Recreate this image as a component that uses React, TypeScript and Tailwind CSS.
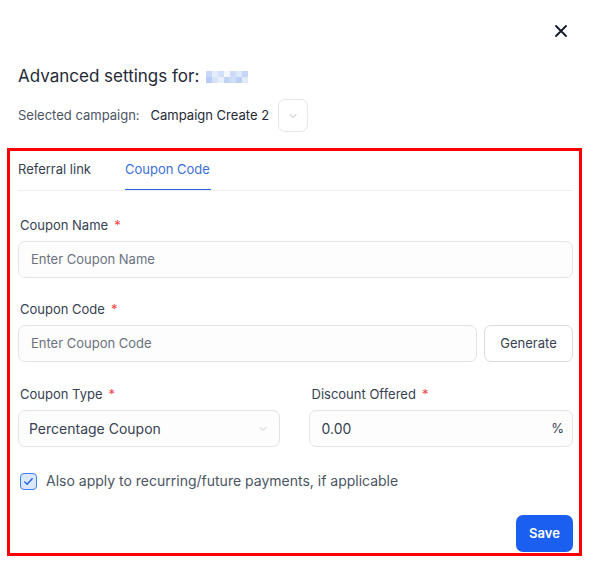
import React from "react";

const Chevron = ({ className = "" }: { className?: string }) => (
  <svg className={className} width="12" height="12" viewBox="0 0 24 24" fill="none" stroke="currentColor" strokeWidth="1.5" strokeLinecap="round" strokeLinejoin="round">
    <path d="M6 9l6 6 6-6" />
  </svg>
);

const Label = ({ children }: { children: React.ReactNode }) => (
  <div className="flex items-center h-4 text-[13px] text-[#374151] pl-[2px] mb-[7px]">
    <span>{children}</span>
    <span className="text-[#ef4444] ml-[6px]">*</span>
  </div>
);

const blur = [
  ["#c9d8f7", "#e4ebfb", "#d3dff8", "#f3f6fd", "#cddbf8", "#dfe7fa", "#c5d5f7"],
  ["#b7cbf5", "#d8e3f9", "#e9eefc", "#c2d3f6", "#d0ddf8", "#bcd0f6", "#e1e9fb"],
];

export default function App() {
  return (
    <div className="w-[590px] h-[567px] bg-white relative" style={{ fontFamily: "Inter, 'Noto Sans', sans-serif" }}>
      <div className="flex justify-end pt-[24px] pr-[22px]">
        <svg width="14" height="14" viewBox="0 0 14 14" fill="none" stroke="#111827" strokeWidth="1.8" strokeLinecap="round">
          <path d="M2 2l10 10M12 2L2 12" />
        </svg>
      </div>
      <div className="pl-[18px] mt-[28px] flex items-center h-[22px]">
        <span className="text-[17px] text-[#1f2937]">Advanced settings for:</span>
        <span className="ml-[7px] flex flex-col">
          {blur.map((row, i) => (
            <span key={i} className="flex">
              {row.map((c, j) => (
                <span key={j} className="w-[6px] h-[6px]" style={{ backgroundColor: c }} />
              ))}
            </span>
          ))}
        </span>
      </div>
      <div className="pl-[18px] mt-[11px] flex items-center h-[33px]">
        <span className="text-[13px] text-[#4b5563]">Selected campaign:</span>
        <span className="ml-[11px] text-[13px] text-[#1f2937]">Campaign Create 2</span>
        <button className="ml-[9px] w-[30px] h-[33px] rounded-[7px] border border-[#e5e7eb] flex items-center justify-center text-[#9ca3af]">
          <Chevron />
        </button>
      </div>
      <div className="absolute left-[7px] top-[148px] w-[575px] h-[408px] border-[3px] border-[#ff0000] pl-[8px] pr-[6px] flex flex-col">
        <div className="flex border-b border-[#eceef3] h-[40px]">
          <div className="text-[13px] text-[#374151] pt-[8px] leading-[20px]">Referral link</div>
          <div className="ml-[34px] text-[13px] text-[#3b6fe0] pt-[8px] leading-[20px] border-b-[1.5px] border-[#2f66e0] px-0 w-[86px]">Coupon Code</div>
        </div>
        <div className="mt-[27px]">
          <Label>Coupon Name</Label>
          <div className="h-[37px] rounded-[7px] border border-[#e2e4e8] bg-[#fdfdfd] flex items-center px-[12px] text-[13px] text-[#6b7280]">Enter Coupon Name</div>
        </div>
        <div className="mt-[24px]">
          <Label>Coupon Code</Label>
          <div className="flex gap-[7px]">
            <div className="flex-1 h-[37px] rounded-[7px] border border-[#e2e4e8] bg-[#fdfdfd] flex items-center px-[12px] text-[13px] text-[#6b7280]">Enter Coupon Code</div>
            <button className="w-[89px] h-[37px] rounded-[7px] border border-[#d9dce1] text-[13px] text-[#374151] bg-white">Generate</button>
          </div>
        </div>
        <div className="mt-[25px] grid grid-cols-2 gap-[30px]">
          <div>
            <Label>Coupon Type</Label>
            <div className="w-[262px] h-[37px] rounded-[7px] border border-[#e2e4e8] bg-[#fdfdfd] flex items-center justify-between pl-[10px] pr-[10px] text-[14px] text-[#374151]">
              <span>Percentage Coupon</span>
              <Chevron className="text-[#b0b5bd]" />
            </div>
          </div>
          <div className="-ml-[1px]">
            <Label>Discount Offered</Label>
            <div className="-ml-[1px] h-[37px] rounded-[7px] border border-[#e2e4e8] bg-[#fdfdfd] flex items-center justify-between pl-[12px] pr-[8px] text-[14px] text-[#374151]">
              <span>0.00</span>
              <span className="text-[13px]">%</span>
            </div>
          </div>
        </div>
        <div className="mt-[24px] flex items-center pl-[2px]">
          <div className="w-[17px] h-[17px] rounded-[4px] border-[1.5px] border-[#3b82f6] bg-[#dbe7fd] flex items-center justify-center">
            <svg width="11" height="11" viewBox="0 0 12 12" fill="none" stroke="#2563eb" strokeWidth="1.6" strokeLinecap="round" strokeLinejoin="round">
              <path d="M2 6.5l2.5 2.5L10 3" />
            </svg>
          </div>
          <span className="ml-[9px] text-[14px] leading-[20px] text-[#4b5563]">Also apply to recurring/future payments, if applicable</span>
        </div>
        <div className="mt-[24px] flex justify-end">
          <button className="w-[57px] h-[37px] rounded-[7px] bg-[#1a5ff0] text-white text-[13px] font-semibold">Save</button>
        </div>
      </div>
    </div>
  );
}
